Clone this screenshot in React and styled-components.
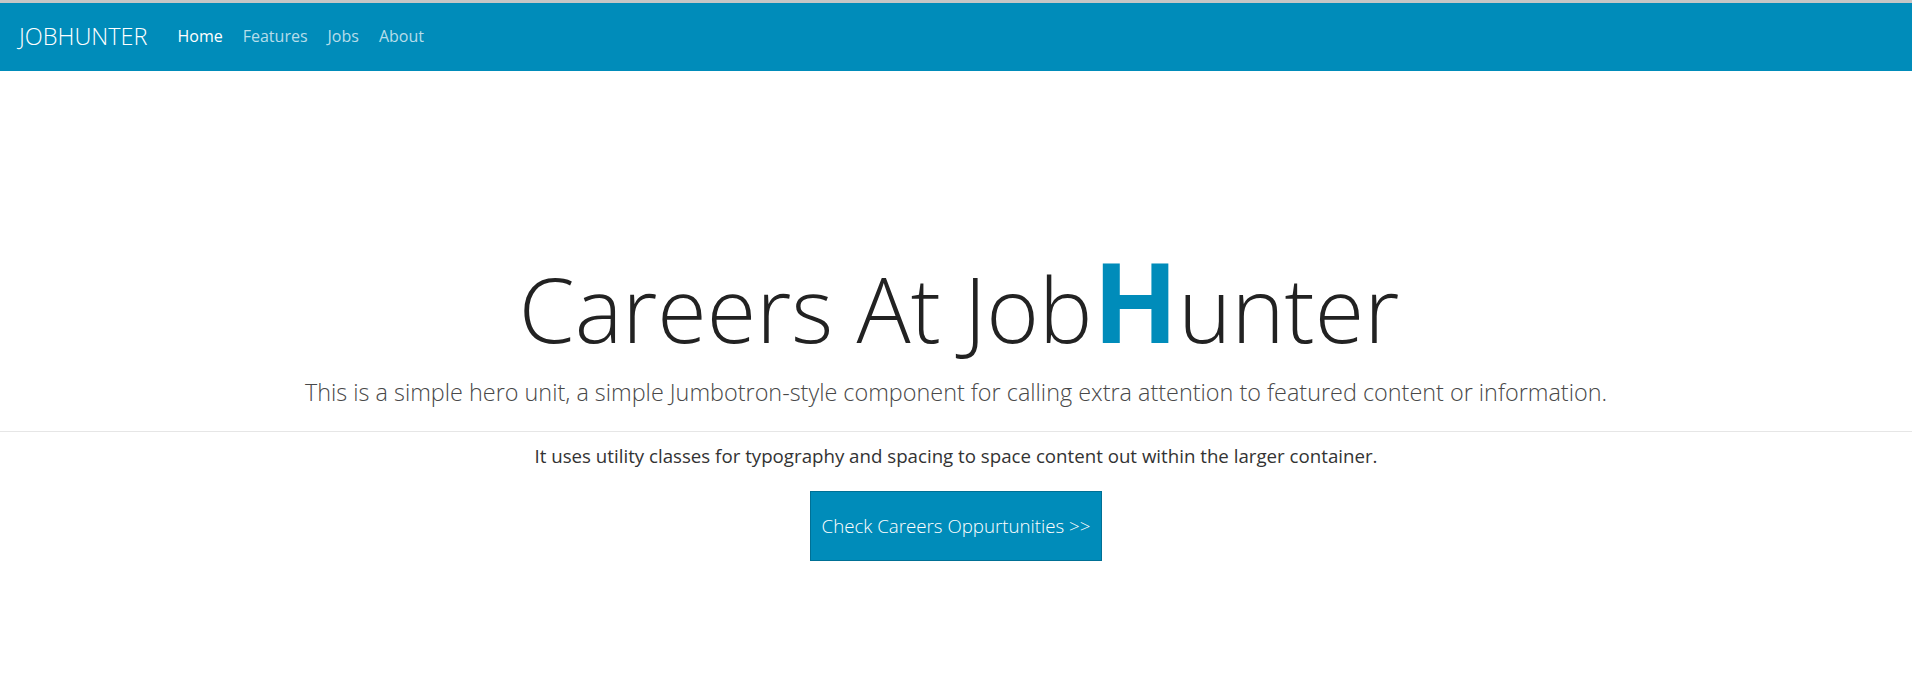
import styled, { createGlobalStyle } from "styled-components";

const GlobalStyle = createGlobalStyle`
    html, body {
        margin: 0;
        padding: 0;
        background: #ffffff;
    }

    body {
        font-family: "Open Sans", "Noto Sans", sans-serif;
        color: #222222;
        border-top: 3px solid #c6c6c6;
    }

    * {
        box-sizing: border-box;
    }
`;

const Navbar = styled.nav`
    background: #008cba;
    height: 68px;
    display: flex;
    align-items: center;
    padding: 0 19px 2px;
`;

const Brand = styled.a`
    color: #ffffff;
    font-size: 23.5px;
    font-weight: 300;
    text-decoration: none;
    margin-right: 20px;
`;

const NavList = styled.ul`
    display: flex;
    list-style: none;
    margin: 0;
    padding: 0;
`;

const NavLink = styled.a`
    display: block;
    padding: 0 10px;
    font-size: 16px;
    color: ${(props) => (props.$active ? "#ffffff" : "rgba(255, 255, 255, 0.72)")};
    text-decoration: none;
`;

const Hero = styled.section`
    display: flex;
    flex-direction: column;
    align-items: center;
    text-align: center;
    padding-top: 183px;
`;

const Title = styled.h1`
    margin: 0;
    padding-left: 6px;
    font-size: 90px;
    font-weight: 300;
    line-height: 1.2;
    color: #222222;
`;

const Accent = styled.span`
    color: #008cba;
    font-size: 112px;
    font-weight: 700;
    line-height: 0;
`;

const Lead = styled.p`
    margin: 13px 0 0;
    font-size: 23.4px;
    font-weight: 300;
    line-height: 1.5;
    color: #484848;
`;

const Divider = styled.hr`
    width: 100%;
    margin: 21px 0 0;
    border: 0;
    border-top: 1px solid #e6e6e6;
`;

const Text = styled.p`
    margin: 10px 0 0;
    font-size: 18.7px;
    line-height: 1.5;
    color: #333333;
`;

const Button = styled.a`
    display: block;
    margin-top: 21px;
    padding: 20px 11px;
    background: #008cba;
    border: 1px solid #007095;
    color: #ffffff;
    font-size: 18.7px;
    font-weight: 300;
    line-height: 1.5;
    text-decoration: none;
    cursor: pointer;
`;

const App = () => {
    const links = ["Home", "Features", "Jobs", "About"];

    return (
        <>
            <GlobalStyle />
            <Navbar>
                <Brand href="#">JOBHUNTER</Brand>
                <NavList>
                    {links.map((link, i) => (
                        <li key={link}>
                            <NavLink href="#" $active={i === 0}>
                                {link}
                            </NavLink>
                        </li>
                    ))}
                </NavList>
            </Navbar>
            <Hero>
                <Title>
                    Careers At Job<Accent>H</Accent>unter
                </Title>
                <Lead>
                    This is a simple hero unit, a simple Jumbotron-style component for calling
                    extra attention to featured content or information.
                </Lead>
                <Divider />
                <Text>
                    It uses utility classes for typography and spacing to space content out
                    within the larger container.
                </Text>
                <Button href="#">Check Careers Oppurtunities &gt;&gt;</Button>
            </Hero>
        </>
    );
};

export default App;
